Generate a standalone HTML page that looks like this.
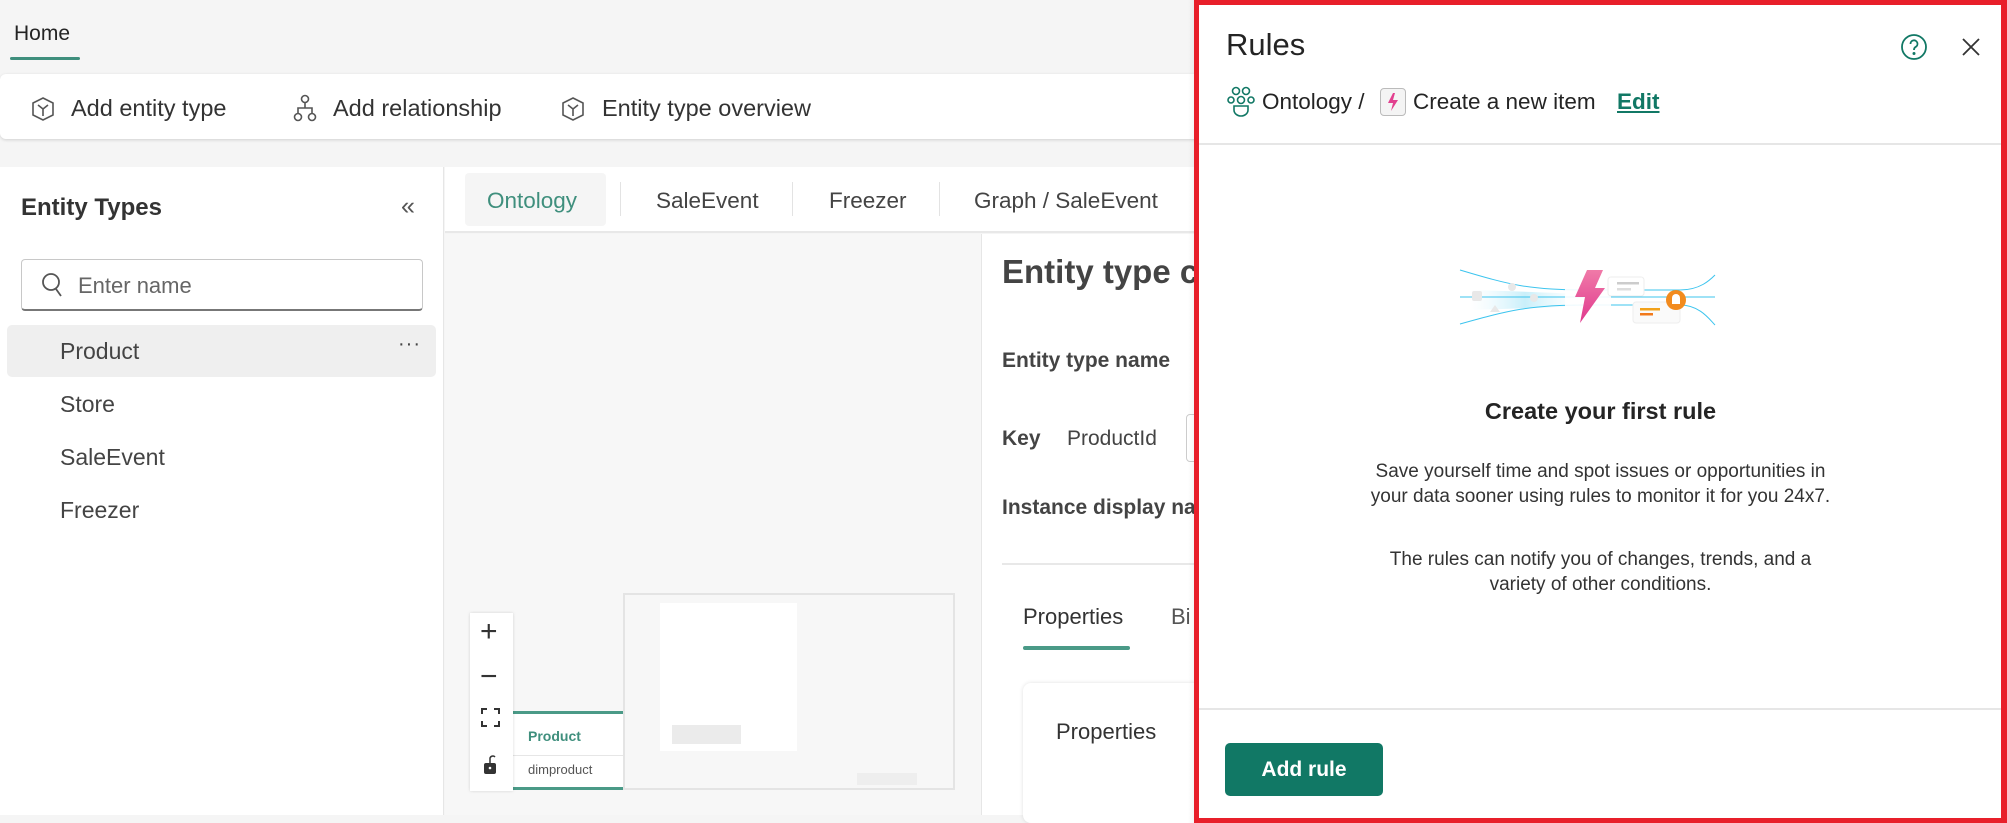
<!DOCTYPE html>
<html><head><meta charset="utf-8"><style>
*{box-sizing:border-box;margin:0;padding:0}
body{width:2007px;height:823px;overflow:hidden;background:#f5f5f5;font-family:"Liberation Sans",sans-serif;color:#242424;position:relative}
.a{position:absolute;white-space:nowrap}
</style></head><body>
<div class="a" style="left:14px;top:22px;font-size:21px;color:#242424">Home</div>
<div class="a" style="left:10px;top:57px;width:70px;height:3px;background:#3f8f7d;border-radius:2px"></div>
<div class="a" style="left:0;top:74px;width:1240px;height:65px;background:#fff;border-radius:6px;box-shadow:0 1px 3px rgba(0,0,0,.15)"></div>
<svg class="a" style="left:31px;top:96px" width="24" height="26" viewBox="0 0 24 26" fill="none" stroke="#555" stroke-width="1.6"><path d="M12 2 L22 7 V19 L12 24 L2 19 V7 Z"/><path d="M7 9 L12 13 L17 9 M12 13 V20"/></svg>
<div class="a" style="left:71px;top:95px;font-size:23.5px;color:#333">Add entity type</div>
<svg class="a" style="left:292px;top:94px" width="26" height="28" viewBox="0 0 26 28" fill="none" stroke="#555" stroke-width="1.6"><circle cx="13" cy="5" r="3.5"/><path d="M13 9 V14 M6 19 V14 H20 V19"/><circle cx="6" cy="23" r="3.5"/><circle cx="20" cy="23" r="3.5"/></svg>
<div class="a" style="left:333px;top:95px;font-size:23.5px;color:#333">Add relationship</div>
<svg class="a" style="left:561px;top:96px" width="24" height="26" viewBox="0 0 24 26" fill="none" stroke="#555" stroke-width="1.6"><path d="M12 2 L22 7 V19 L12 24 L2 19 V7 Z"/><path d="M7 9 L12 13 L17 9 M12 13 V20"/></svg>
<div class="a" style="left:602px;top:95px;font-size:23.5px;color:#333">Entity type overview</div>
<div class="a" style="left:0;top:167px;width:444px;height:648px;background:#fff;border-right:1px solid #e6e6e6"></div>
<div class="a" style="left:21px;top:194px;font-size:24px;font-weight:bold;color:#333">Entity Types</div>
<div class="a" style="left:401px;top:192px;font-size:25px;color:#555">«</div>
<div class="a" style="left:21px;top:259px;width:402px;height:52px;border:1px solid #c8c8c8;border-bottom:2px solid #777;border-radius:4px;background:#fff"></div>
<svg class="a" style="left:40px;top:271px" width="24" height="28" viewBox="0 0 24 28" fill="none" stroke="#555" stroke-width="1.8"><circle cx="11" cy="11" r="8"/><path d="M16 18 L21 25"/></svg>
<div class="a" style="left:78px;top:273px;font-size:22px;color:#666">Enter name</div>
<div class="a" style="left:7px;top:325px;width:429px;height:52px;background:#efefef;border-radius:5px"></div>
<div class="a" style="left:60px;top:338px;font-size:23px;color:#444">Product</div>
<div class="a" style="left:398px;top:333px;font-size:20px;color:#444;letter-spacing:1px">···</div>
<div class="a" style="left:60px;top:391px;font-size:23px;color:#444">Store</div>
<div class="a" style="left:60px;top:444px;font-size:23px;color:#444">SaleEvent</div>
<div class="a" style="left:60px;top:497px;font-size:23px;color:#444">Freezer</div>
<div class="a" style="left:445px;top:167px;width:760px;height:66px;background:#fff;border-bottom:2px solid #e8e8e8"></div>
<div class="a" style="left:465px;top:173px;width:141px;height:53px;background:#f5f5f5;border-radius:4px"></div>
<div class="a" style="left:487px;top:188px;font-size:22.5px;color:#3f8f7d">Ontology</div>
<div class="a" style="left:620px;top:182px;width:1px;height:34px;background:#e3e3e3"></div>
<div class="a" style="left:656px;top:188px;font-size:22.5px;color:#444">SaleEvent</div>
<div class="a" style="left:792px;top:182px;width:1px;height:34px;background:#e3e3e3"></div>
<div class="a" style="left:829px;top:188px;font-size:22.5px;color:#444">Freezer</div>
<div class="a" style="left:939px;top:182px;width:1px;height:34px;background:#e3e3e3"></div>
<div class="a" style="left:974px;top:188px;font-size:22.5px;color:#444">Graph / SaleEvent</div>
<div class="a" style="left:445px;top:234px;width:536px;height:581px;background:#f7f7f7"></div>
<div class="a" style="left:981px;top:234px;width:230px;height:581px;background:#fff;border-left:1px solid #e6e6e6"></div>
<div class="a" style="left:1002px;top:253px;font-size:33px;font-weight:bold;color:#444">Entity type c</div>
<div class="a" style="left:1002px;top:349px;font-size:21px;font-weight:bold;color:#444">Entity type name</div>
<div class="a" style="left:1002px;top:427px;font-size:21px;font-weight:bold;color:#444">Key</div>
<div class="a" style="left:1067px;top:427px;font-size:21px;color:#444">ProductId</div>
<div class="a" style="left:1186px;top:414px;width:20px;height:48px;border:1px solid #ccc;border-radius:4px"></div>
<div class="a" style="left:1002px;top:496px;font-size:21px;font-weight:bold;color:#444">Instance display na</div>
<div class="a" style="left:1002px;top:563px;width:200px;height:2px;background:#e8e8e8"></div>
<div class="a" style="left:1023px;top:604px;font-size:22px;color:#333">Properties</div>
<div class="a" style="left:1171px;top:604px;font-size:22px;color:#555">Bi</div>
<div class="a" style="left:1023px;top:646px;width:107px;height:4px;background:#4a9a87;border-radius:2px"></div>
<div class="a" style="left:1023px;top:683px;width:190px;height:140px;background:#fff;border-radius:8px;box-shadow:0 0 4px rgba(0,0,0,.12)"></div>
<div class="a" style="left:1056px;top:719px;font-size:22px;color:#333">Properties</div>
<div class="a" style="left:623px;top:593px;width:332px;height:197px;border:2px solid #e4e4e4;background:#f7f7f7"></div>
<div class="a" style="left:660px;top:603px;width:137px;height:148px;background:#fff"></div>
<div class="a" style="left:672px;top:725px;width:69px;height:19px;background:#ebebeb"></div>
<div class="a" style="left:857px;top:773px;width:60px;height:12px;background:#eee"></div>
<div class="a" style="left:513px;top:711px;width:110px;height:79px;background:#fff;border-top:3px solid #4a9a87;border-bottom:3px solid #4a9a87"></div>
<div class="a" style="left:513px;top:755px;width:110px;height:1px;background:#e6e6e6"></div>
<div class="a" style="left:528px;top:728px;font-size:14px;font-weight:bold;color:#3f8f7d">Product</div>
<div class="a" style="left:528px;top:762px;font-size:13px;color:#555">dimproduct</div>
<div class="a" style="left:470px;top:613px;width:43px;height:178px;background:#fff;box-shadow:0 0 3px rgba(0,0,0,.15)"></div>
<div class="a" style="left:480px;top:615px;font-size:30px;color:#333">+</div>
<div class="a" style="left:480px;top:660px;font-size:30px;color:#333">−</div>
<div class="a" style="left:481px;top:708px;width:19px;height:19px;border:2px dashed #333"></div>
<svg class="a" style="left:483px;top:755px" width="14" height="20" viewBox="0 0 14 20"><path d="M7 8 V3 a3 3 0 0 1 5 -1" fill="none" stroke="#333" stroke-width="1.5"/><rect x="1" y="8" width="12" height="11" rx="2" fill="#333"/><circle cx="7" cy="13" r="1.3" fill="#fff"/></svg>
<div class="a" style="left:1188px;top:0;width:12px;height:823px;background:linear-gradient(to right,rgba(0,0,0,0),rgba(0,0,0,.08))"></div>
<div class="a" style="left:1194px;top:0;width:813px;height:823px;background:#fff;border:5px solid #e81f2a;border-right-width:6px"></div>
<div class="a" style="left:1226px;top:27px;font-size:31px;color:#242424">Rules</div>
<svg class="a" style="left:1900px;top:33px" width="28" height="28" viewBox="0 0 28 28" fill="none" stroke="#117865" stroke-width="1.8"><circle cx="14" cy="14" r="12"/><path d="M10.5 11 a3.5 3.5 0 1 1 5 3 c-1.2.7-1.5 1.3-1.5 3"/><circle cx="14" cy="20.5" r=".6" fill="#117865"/></svg>
<svg class="a" style="left:1961px;top:37px" width="20" height="20" viewBox="0 0 20 20" stroke="#333" stroke-width="1.8"><path d="M2 2 L18 18 M18 2 L2 18"/></svg>
<svg class="a" style="left:1226px;top:86px" width="30" height="32" viewBox="0 0 30 32" fill="none" stroke="#117865" stroke-width="1.6"><circle cx="10" cy="5" r="3.5"/><circle cx="20" cy="5" r="3.5"/><circle cx="15" cy="14" r="3.5"/><circle cx="5" cy="14" r="3"/><circle cx="25" cy="14" r="3"/><path d="M8 20 H22 V24 a7 6 0 0 1 -14 0 Z"/></svg>
<div class="a" style="left:1262px;top:89px;font-size:22.5px;color:#242424">Ontology /</div>
<div class="a" style="left:1380px;top:88px;width:26px;height:28px;border:1px solid #bbb;border-radius:4px;background:#f4f4f4"></div>
<svg class="a" style="left:1385px;top:92px" width="16" height="20" viewBox="0 0 16 20"><path d="M8 1 L3 11 H8 L6 19 L13 8 H8 L10 1 Z" fill="#e2408f"/></svg>
<div class="a" style="left:1413px;top:89px;font-size:22.5px;color:#242424">Create a new item</div>
<div class="a" style="left:1617px;top:89px;font-size:22.5px;font-weight:bold;color:#117865;text-decoration:underline">Edit</div>
<div class="a" style="left:1199px;top:143px;width:802px;height:2px;background:#e6e6e6"></div>
<svg class="a" style="left:1440px;top:250px" width="290" height="100" viewBox="0 0 290 100">
<defs><linearGradient id="g" x1="0" x2="1"><stop offset="0" stop-color="#e6f8fd" stop-opacity="0"/><stop offset=".5" stop-color="#c9effa"/><stop offset="1" stop-color="#e6f8fd" stop-opacity="0"/></linearGradient>
<linearGradient id="b" x1="0" y1="0" x2="0" y2="1"><stop offset="0" stop-color="#f07aa8"/><stop offset="1" stop-color="#e0398e"/></linearGradient></defs>
<path d="M30 40 Q100 42 140 44 L140 56 Q100 58 30 60Z" fill="url(#g)"/>
<g fill="none" stroke="#3cc4ee" stroke-width="1"><path d="M20 20 C70 35 90 40 145 40 L240 40 C260 40 270 30 275 25"/><path d="M20 47 H275"/><path d="M20 74 C70 60 90 55 145 55 L240 55 C260 55 270 70 275 75"/></g>
<rect x="32" y="41" width="10" height="10" rx="2" fill="#e8e8e8"/><circle cx="72" cy="37" r="4" fill="#e8e8e8"/><circle cx="94" cy="48" r="4" fill="#e8e8e8"/><path d="M50 62 L55 55 L60 62Z" fill="#e8e8e8"/>
<rect x="125" y="14" width="46" height="68" rx="12" fill="#fff" opacity=".9"/>
<path d="M147 20 H163 L155 38 H165 L140 73 L145 47 H135 Z" fill="url(#b)"/>
<rect x="168" y="27" width="36" height="19" rx="3" fill="#fff" stroke="#eee"/><rect x="177" y="32" width="22" height="2.5" fill="#ccc"/><rect x="177" y="38" width="14" height="2.5" fill="#ddd"/>
<rect x="193" y="52" width="47" height="21" rx="3" fill="#fafafa" stroke="#eee"/><rect x="200" y="58" width="20" height="2.5" fill="#f2a21b"/><rect x="200" y="63" width="13" height="2.5" fill="#f27a1b"/>
<circle cx="236" cy="50" r="10" fill="#f28b1e"/><path d="M232 54 V48 a4 4 0 0 1 8 0 V54Z" fill="#fff"/>
</svg>
<div class="a" style="left:1200px;top:398px;width:801px;text-align:center;font-size:23.5px;font-weight:bold;color:#242424">Create your first rule</div>
<div class="a" style="left:1200px;top:459px;width:801px;text-align:center;font-size:19px;line-height:25px;color:#333;white-space:normal">Save yourself time and spot issues or opportunities in<br>your data sooner using rules to monitor it for you 24x7.</div>
<div class="a" style="left:1200px;top:547px;width:801px;text-align:center;font-size:19px;line-height:25px;color:#333;white-space:normal">The rules can notify you of changes, trends, and a<br>variety of other conditions.</div>
<div class="a" style="left:1199px;top:708px;width:802px;height:2px;background:#e6e6e6"></div>
<div class="a" style="left:1225px;top:743px;width:158px;height:53px;background:#117865;border-radius:5px;color:#fff;font-size:21px;font-weight:bold;text-align:center;line-height:53px">Add rule</div>
</body></html>
